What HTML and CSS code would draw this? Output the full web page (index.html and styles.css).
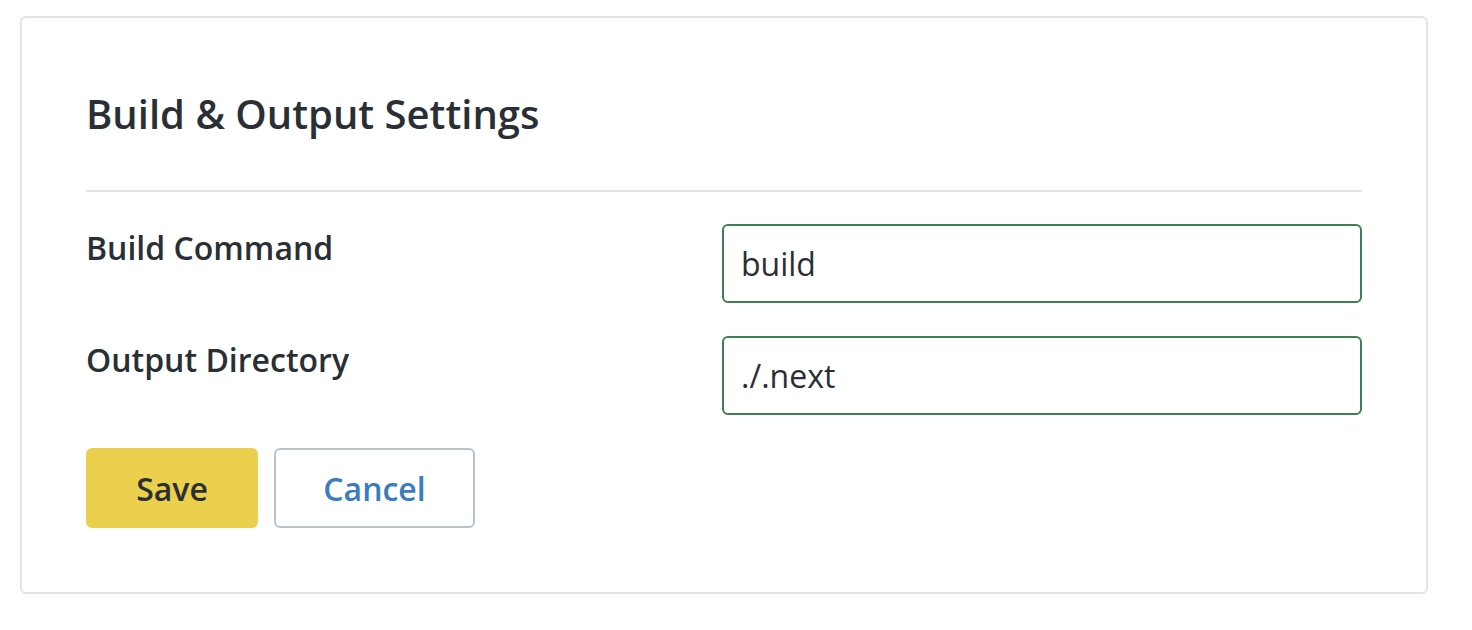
FILE: index.html
```html
<!DOCTYPE html>
<html lang="en">
<head>
  <meta charset="UTF-8" />
  <meta name="viewport" content="width=device-width, initial-scale=1.0" />
  <title>Build &amp; Output Settings</title>
  <link rel="stylesheet" href="styles.css">
</head>
<body>
  <div class="card">
    <h2 class="card-title">Build &amp; Output Settings</h2>
    <form class="settings">
      <div class="row">
        <label for="buildCmd">Build Command</label>
        <input type="text" id="buildCmd" value="build" />
      </div>
      <div class="row">
        <label for="outDir">Output Directory</label>
        <input type="text" id="outDir" value="./.next" />
      </div>
      <div class="actions">
        <button type="button" class="btn btn-save">Save</button>
        <button type="button" class="btn btn-cancel">Cancel</button>
      </div>
    </form>
  </div>
</body>
</html>
```

FILE: styles.css
```css
body {
  margin: 0;
  padding: 16px 20px;
  font-family: "Open Sans", "Noto Sans", sans-serif;
  background: #fff;
  color: #2a2f36;
}
.card {
  width: 1408px;
  box-sizing: border-box;
  border: 2px solid #e1e5e8;
  border-radius: 6px;
  padding: 72px 64px 64px 64px;
}
.card-title {
  margin: 0;
  font-size: 40px;
  font-weight: 600;
  line-height: 48px;
  padding-bottom: 52px;
  border-bottom: 2px solid #e1e5e8;
}
.settings {
  padding-top: 32px;
}
.row {
  display: grid;
  grid-template-columns: 636px 1fr;
  margin-bottom: 33px;
}
.row label {
  font-size: 32px;
  font-weight: 600;
  line-height: 48px;
}
.row input {
  height: 79px;
  box-sizing: border-box;
  border: 2px solid #3d7f52;
  border-radius: 6px;
  padding: 0 17px;
  font-family: inherit;
  font-size: 32px;
  color: #2a2f36;
  outline: none;
}
.actions {
  display: flex;
  gap: 16px;
}
.btn {
  height: 80px;
  box-sizing: border-box;
  border-radius: 6px;
  font-family: inherit;
  font-size: 32px;
  font-weight: 600;
  cursor: pointer;
}
.btn-save {
  width: 172px;
  background: #ead04c;
  border: none;
  color: #2a2f36;
}
.btn-cancel {
  width: 201px;
  background: #fff;
  border: 2px solid #b7c2ce;
  color: #3a7dbd;
}
```
